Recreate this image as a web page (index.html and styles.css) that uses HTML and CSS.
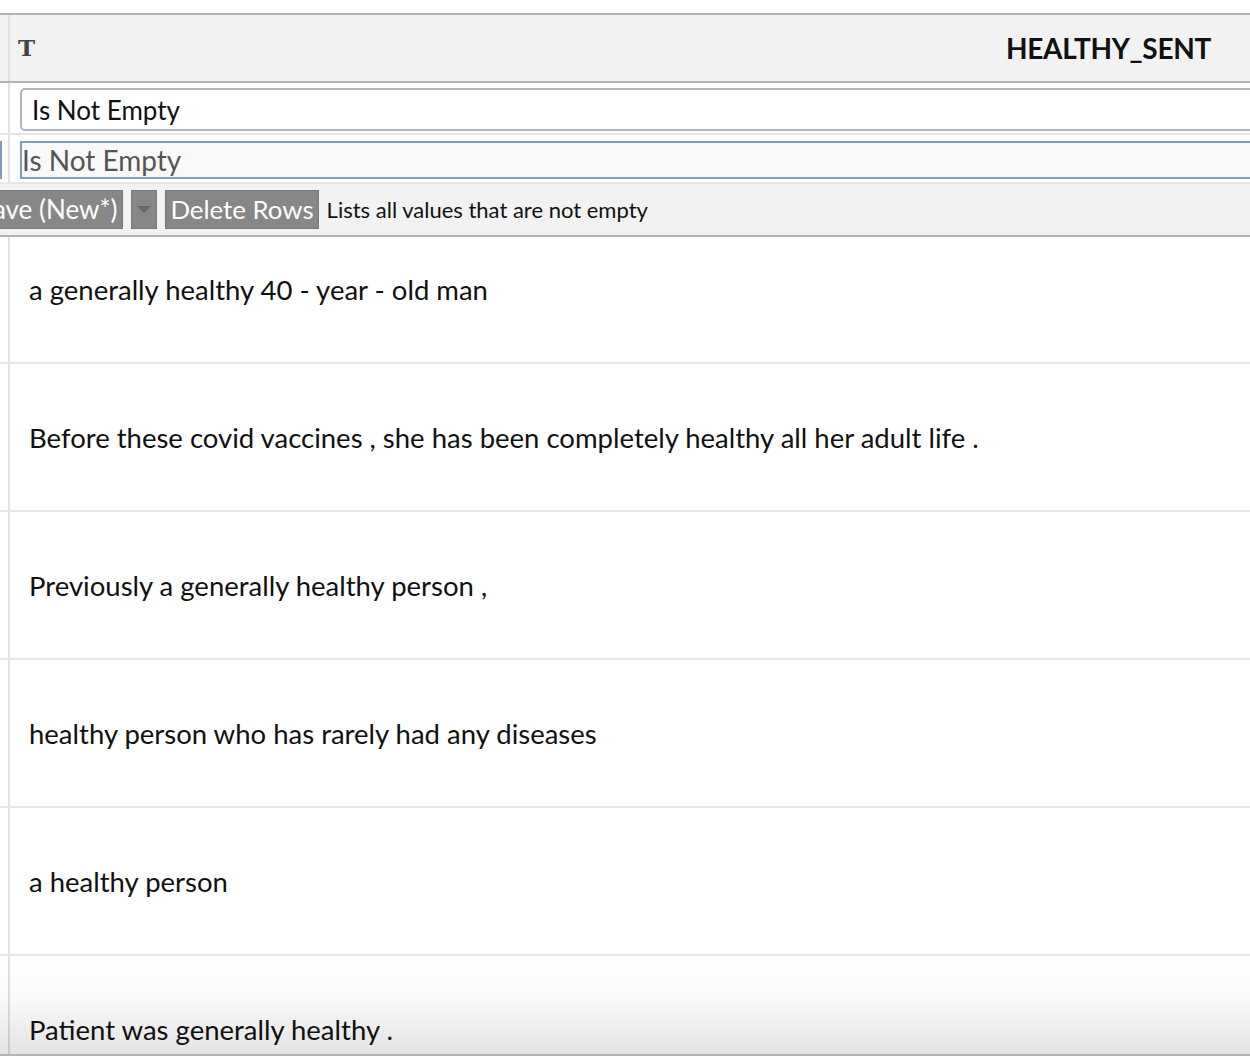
FILE: index.html
```html
<!DOCTYPE html>
<html>
<head>
<meta charset="utf-8">
<link rel="stylesheet" href="styles.css">
</head>
<body>
<div class="page">
  <div class="header">
    <div class="lead"></div>
    <div class="head-cell">
      <span class="type-icon">T</span>
      <span class="col-name">HEALTHY_SENT</span>
    </div>
  </div>
  <div class="filter-row">
    <div class="lead"></div>
    <div class="filter-cell"><div class="select-box">Is Not Empty</div></div>
  </div>
  <div class="filter-row2">
    <div class="lead2"><div class="stub-input"></div></div>
    <div class="filter-cell2"><div class="text-box">Is Not Empty</div></div>
  </div>
  <div class="toolbar">
    <button class="btn btn-save">Save (New*)</button>
    <button class="btn btn-drop"><span class="tri"></span></button>
    <button class="btn btn-del">Delete Rows</button>
    <span class="hint">Lists all values that are not empty</span>
  </div>
  <div class="rows">
    <div class="row first"><div class="lead"></div><div class="cell">a generally healthy 40 - year - old man</div></div>
    <div class="row"><div class="lead"></div><div class="cell">Before these covid vaccines , she has been completely healthy all her adult life .</div></div>
    <div class="row"><div class="lead"></div><div class="cell">Previously a generally healthy person ,</div></div>
    <div class="row"><div class="lead"></div><div class="cell">healthy person who has rarely had any diseases</div></div>
    <div class="row"><div class="lead"></div><div class="cell">a healthy person</div></div>
    <div class="row"><div class="lead"></div><div class="cell">Patient was generally healthy .</div></div>
    <div class="fade"></div>
  </div>
</div>
</body>
</html>
```
FILE: styles.css
```css
html, body {
  margin: 0;
  padding: 0;
  background: #ffffff;
}
body {
  font-family: Lato, "Open Sans", sans-serif;
  color: #111;
  overflow: hidden;
}
.page {
  width: 1250px;
  height: 1056px;
  padding-top: 13px;
  box-sizing: border-box;
  display: flex;
  flex-direction: column;
  overflow: hidden;
}
.header {
  display: flex;
  height: 70px;
  box-sizing: border-box;
  background: #f2f2f2;
  border-top: 2px solid #b3b3b3;
  border-bottom: 2px solid #b3b3b3;
}
.lead {
  width: 8px;
  flex: none;
  border-right: 2px solid #e2e2e2;
}
.head-cell {
  flex: 1;
  display: flex;
  align-items: center;
  justify-content: space-between;
  padding: 0 39px 0 8px;
}
.type-icon {
  font-family: "DejaVu Serif", serif;
  font-weight: bold;
  font-size: 23px;
  color: #444;
  margin-top: -2px;
}
.col-name {
  font-weight: bold;
  font-size: 28px;
  color: #111;
  letter-spacing: -0.3px;
}
.filter-row {
  display: flex;
  height: 52px;
  box-sizing: border-box;
  border-bottom: 2px solid #e6e6e6;
}
.filter-cell {
  flex: 1;
  padding: 5px 0 0 10px;
}
.select-box {
  height: 43px;
  box-sizing: border-box;
  border: 2px solid #b3b3b3;
  border-radius: 5px;
  margin-right: -20px;
  padding-left: 10px;
  display: flex;
  align-items: center;
  font-size: 26px;
  color: #111;
  background: #fff;
}
.filter-row2 {
  display: flex;
  height: 49px;
  box-sizing: border-box;
  border-bottom: 2px solid #e6e6e6;
  padding-top: 6px;
}
.lead2 {
  width: 8px;
  flex: none;
  border-right: 2px solid #e2e2e2;
  margin-top: -6px;
}
.stub-input {
  width: 2px;
  height: 38px;
  margin-top: 6px;
  background: #7f9db9;
}
.filter-cell2 {
  flex: 1;
  padding-left: 10px;
}
.text-box {
  height: 38px;
  box-sizing: border-box;
  border: 2px solid #7f9db9;
  border-right: none;
  background: #f9f9f9;
  padding-left: 0;
  display: flex;
  align-items: center;
  font-size: 28px;
  color: #555;
}
.toolbar {
  height: 53px;
  box-sizing: border-box;
  background: #f2f2f2;
  border-bottom: 2px solid #b3b3b3;
  display: flex;
  align-items: center;
  gap: 8px;
  padding-bottom: 1px;
}
.btn {
  height: 39px;
  box-sizing: border-box;
  border: 1px solid #777;
  background: #878787;
  color: #fff;
  font-family: Lato, "Open Sans", sans-serif;
  font-size: 26px;
  padding: 0 5px;
  display: flex;
  align-items: center;
  margin: 0;
  white-space: nowrap;
  flex: none;
}
.btn-save {
  margin-left: -27px;
}
.btn-drop {
  width: 26px;
  justify-content: center;
  padding: 0;
}
.btn-del {
  padding: 0 4px;
  font-size: 25.8px;
}
.tri {
  width: 0;
  height: 0;
  border-left: 7px solid transparent;
  border-right: 7px solid transparent;
  border-top: 7px solid #666;
}
.hint {
  font-size: 22px;
  color: #111;
}
.rows {
  flex: 1;
  position: relative;
  overflow: hidden;
  border-bottom: 2px solid #b3b3b3;
  display: flex;
  flex-direction: column;
}
.row {
  display: flex;
  flex: none;
  height: 148px;
  box-sizing: border-box;
  border-bottom: 2px solid #e6e6e6;
}
.row.first {
  margin-top: -21px;
}
.cell {
  flex: 1;
  display: flex;
  align-items: center;
  padding-left: 19px;
  font-size: 27.5px;
  color: #111;
}
.fade {
  position: absolute;
  left: 0;
  right: 0;
  bottom: 0;
  height: 97px;
  background: linear-gradient(to bottom, rgba(0,0,0,0) 0%, rgba(0,0,0,0.02) 40%, rgba(0,0,0,0.11) 100%);
  pointer-events: none;
}
```
